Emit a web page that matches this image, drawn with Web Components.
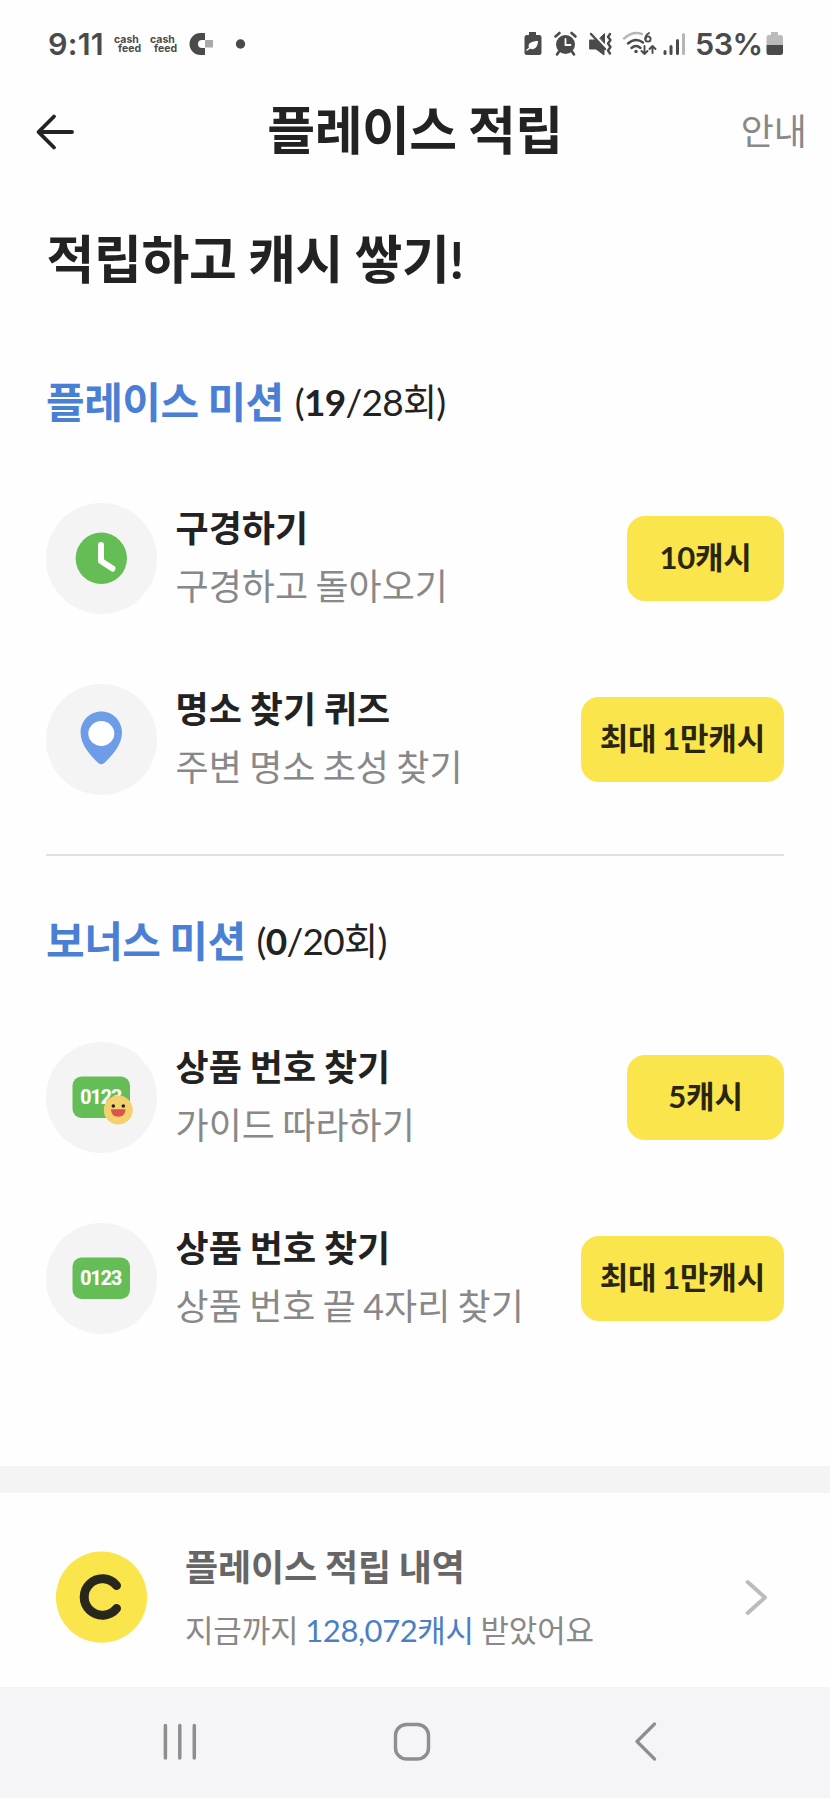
<!DOCTYPE html>
<html lang="ko">
<head>
<meta charset="utf-8">
<meta name="viewport" content="width=device-width, initial-scale=1">
<title>플레이스 적립</title>
<style>
     body {
          margin: 0;
          background: #fefefe;
          color: #222;
          font-family: Lato, "Noto Sans CJK KR", sans-serif;
          word-spacing: -0.8px;
     }
     main {
          padding: 0 46px;
          height: 1284px;
          box-sizing: border-box;
     }
     h1 {
          margin: 0;
          padding: 37px 0 0 0.5px;
          font-size: 52px;
          line-height: 80px;
          letter-spacing: -0.3px;
          word-spacing: -1px;
     }
     hr {
          margin: 24px 0 0;
          border: 0;
          height: 2px;
          background: #e0e0e0;
     }
</style>
</head>
<body>
<status-bar></status-bar>
<app-header>플레이스 적립<span slot="action">안내</span></app-header>
<main>
     <h1>적립하고 캐시 쌓기!</h1>
     <mission-section style="margin-top: 73px" name="플레이스 미션" done="19" total="28">
          <mission-item icon="clock" reward="10캐시">구경하기<span slot="sub">구경하고 돌아오기</span></mission-item>
          <mission-item icon="pin" reward="최대 1만캐시">명소 찾기 퀴즈<span slot="sub">주변 명소 초성 찾기</span></mission-item>
     </mission-section>
     <hr>
     <mission-section style="margin-top: 55px" name="보너스 미션" done="0" total="20">
          <mission-item icon="guide" reward="5캐시">상품 번호 찾기<span slot="sub">가이드 따라하기</span></mission-item>
          <mission-item icon="number" reward="최대 1만캐시">상품 번호 찾기<span slot="sub">상품 번호 끝 4자리 찾기</span></mission-item>
     </mission-section>
</main>
<history-link amount="128,072캐시">플레이스 적립 내역</history-link>
<nav-bar></nav-bar>

<script>
"use strict";

function render(element, html){
     const template = document.createElement('template');
     template.innerHTML = html;
     element.attachShadow({ mode: 'open' });
     element.shadowRoot.appendChild( template.content.cloneNode(true) );
}

class StatusBar extends HTMLElement {
     constructor(){
          super();
          render(this, `
               <style>
                    :host {
                         display: flex;
                         align-items: center;
                         height: 78px;
                         padding: 10px 46px 0 48px;
                         box-sizing: border-box;
                         color: #4a4a4a;
                         font-family: Inter, sans-serif;
                         font-weight: 600;
                    }
                    .time { font-size: 30.500px; width: 66px; letter-spacing: 0.2px; margin-top: -1px; }
                    .cash {
                         width: 36px;
                         font-size: 10.500px;
                         line-height: 9px;
                         font-weight: 700;
                    }
                    .cash span { display: block; padding-left: 4px; }
                    .icons { display: flex; align-items: center; margin-left: auto; }
                    .percent { font-size: 30.500px; width: 71px; margin: -1px 0 0 9px; letter-spacing: -0.5px; }
                    svg { display: block; flex: none; }
               </style>
               <div class="time">9:11</div>
               <div class="cash">cash<span>feed</span></div>
               <div class="cash">cash<span>feed</span></div>
               <svg width="60" height="26" viewBox="0 0 60 26">
                    <path d="M19 2v7h-3a4 4 0 0 0 0 8h3v7h-4.500a11 11 0 0 1 0-22z" fill="#4a4a4a"/>
                    <rect x="19" y="9" width="8" height="7.500" fill="#aaa"/>
                    <circle cx="54.500" cy="13" r="4.700" fill="#4a4a4a"/>
               </svg>
               <div class="icons">
                    <svg width="162" height="26" viewBox="0 0 162 26" fill="none" stroke="#4a4a4a" stroke-width="2.400" stroke-linecap="round">
                         <path d="M5 1h7v3h3q2.500 0 2.500 2.500v15q0 2.500-2.500 2.500H3q-2.500 0-2.500-2.500v-15Q.5 4 3 4h2z" fill="#4a4a4a" stroke="none"/>
                         <path d="M5 17c-2-5 3-7 9-7 0 7-5 10-9 7z" fill="#fff" stroke="none"/>
                         <path d="M3 19l7-5" stroke="#fff" stroke-width="1.500"/>
                         <circle cx="41.500" cy="13.500" r="9.500" fill="#4a4a4a" stroke="none"/>
                         <path d="M31.500 5.500l4-3.500M51.500 5.500l-4-3.500M35 20.500l-2 3M48 20.500l2 3" stroke-width="2.600"/>
                         <path d="M41.500 8v6h5" stroke="#fff" stroke-width="1.800"/>
                         <path d="M66 9h5l4 4 5 5v6l-8-6h-6zM76 7l4.500-4.500V12z" fill="#4a4a4a" stroke="#4a4a4a" stroke-width="1" stroke-linejoin="round"/>
                         <path d="M67 3l14 15"/>
                         <path d="M86 3l-2 3 2.500 3-2.500 3.500 2.500 3.500-2.500 3.500 2 3" stroke-linejoin="round"/>
                         <path d="M100 7.500q9-8 18-4.500" stroke="#b5b5b5"/>
                         <path d="M104 12.500q7.500-6.500 15-1M107.500 17q4.500-4 9 0"/>
                         <circle cx="112" cy="20.500" r="1.700" fill="#4a4a4a" stroke="none"/>
                         <path d="M125 2c-3 2-4 4.500-3.500 6.500" stroke-width="1.900"/>
                         <circle cx="124" cy="8" r="2.600" stroke-width="1.900"/>
                         <path d="M120.500 15v8m-3-3l3 3 3-3M128.500 22v-7m-3 3l3-3 3 3" stroke-width="1.900" stroke-linejoin="round"/>
                         <path d="M141 20.500v2M147 15.500v7M153.500 9.500v13" stroke-width="3"/>
                         <path d="M159.500 3.500v19" stroke="#b5b5b5" stroke-width="3"/>
                    </svg>
                    <div class="percent">53%</div>
                    <svg width="18" height="26" viewBox="0 0 18 26">
                         <path d="M5 1h7v3h3q2 0 2 2.500V14H.5V6.500Q.5 4 3 4h2z" fill="#bbb"/>
                         <path d="M.5 14H17v7.500q0 2.500-2.500 2.500H3q-2.500 0-2.500-2.500z" fill="#4a4a4a"/>
                    </svg>
               </div>
          `);
     }
}

class AppHeader extends HTMLElement {
     constructor(){
          super();
          render(this, `
               <style>
                    :host {
                         display: grid;
                         grid-template-columns: 1fr auto 1fr;
                         align-items: center;
                         height: 104px;
                         padding: 0 23px 0 35px;
                    }
                    .title {
                         transform: translateX(-6px);
                         font-size: 52px;
                         font-weight: 700;
                         line-height: 80px;
                         letter-spacing: -0.5px;
                    }
                    .action { text-align: right; padding-top: 2px; font-size: 36px; color: #888; line-height: 50px; }
                    svg { display: block; margin-top: 4px; }
               </style>
               <svg width="42" height="38" viewBox="0 0 42 38" fill="none" stroke="#222" stroke-width="3.800" stroke-linecap="round" stroke-linejoin="round">
                    <path d="M37 19H4M19 3.500L3.500 19 19 34.500"/>
               </svg>
               <div class="title"><slot></slot></div>
               <div class="action"><slot name="action"></slot></div>
          `);
     }
}

class MissionSection extends HTMLElement {
     constructor(){
          super();
          render(this, `
               <style>
                    :host { display: block; }
                    .head {
                         display: flex;
                         gap: 11px;
                         margin-bottom: 36px;
                         font-size: 37px;
                         line-height: 60px;
                         height: 60px;
                    }
                    .name { font-size: 42px; font-weight: 700; color: #4a80d4; letter-spacing: -0.5px; }
                    .count { letter-spacing: -0.7px; }
               </style>
               <div class="head">
                    <span class="name">${this.getAttribute('name')}</span>
                    <span class="count">(<b>${this.getAttribute('done')}</b>/${this.getAttribute('total')}회)</span>
               </div>
               <slot></slot>
          `);
     }
}

const icons = {
     clock: `
          <circle cx="55.300" cy="55.300" r="25.700" fill="#65bd55"/>
          <path d="M55 42v16l11.500 7.500" fill="none" stroke="#fff" stroke-width="6" stroke-linecap="round" stroke-linejoin="round"/>`,
     pin: `
          <path d="M55.300 27.500c-11.500 0-20.700 9.200-20.700 21 0 12.500 10.500 24 18 30.700q2.700 2.300 5.400 0c7.500-6.700 18-18.200 18-30.700 0-11.800-9.200-21-20.700-21z" fill="#6c9de6"/>
          <ellipse cx="55.300" cy="49.500" rx="13" ry="12.400" fill="#fff"/>`,
     number: `
          <rect x="26.500" y="34.500" width="57.500" height="41.500" rx="9" fill="#65bd55"/>
          <text x="55.300" y="62" text-anchor="middle" textLength="42" font-family="Roboto" font-weight="700" font-size="19.500" fill="#fff" stroke="#fff" stroke-width="0.200">0123</text>`
};
icons.guide = icons.number + `
     <circle cx="72.300" cy="68" r="14.500" fill="#f5d06f"/>
     <circle cx="67.300" cy="64" r="1.800" fill="#222"/>
     <circle cx="77.300" cy="64" r="1.800" fill="#222"/>
     <path d="M65 67.300h14.500q0 7.400-7.250 7.400T65 67.300z" fill="#d9534f"/>`;

class MissionItem extends HTMLElement {
     constructor(){
          super();
          render(this, `
               <style>
                    :host {
                         display: flex;
                         align-items: center;
                         height: 181px;
                    }
                    .icon {
                         flex: none;
                         width: 110.600px;
                         height: 110.600px;
                         border-radius: 50%;
                         background: #f4f4f4;
                    }
                    .text {
                         flex: 1;
                         margin: -3px 0 0 19px;
                         font-size: 36px;
                         line-height: 58px;
                         white-space: nowrap;
                    }
                    .title { font-weight: 700; }
                    .sub { color: #888; word-spacing: -1.900px; }
               </style>
               <svg class="icon" viewBox="0 0 110.600 110.600">${icons[this.getAttribute('icon')]}</svg>
               <div class="text">
                    <div class="title"><slot></slot></div>
                    <div class="sub"><slot name="sub"></slot></div>
               </div>
               <cash-button>${this.getAttribute('reward')}</cash-button>
          `);
     }
}

class CashButton extends HTMLElement {
     constructor(){
          super();
          render(this, `
               <style>
                    :host { display: block; }
                    button {
                         display: block;
                         min-width: 157px;
                         height: 85px;
                         padding: 0 19px 6px;
                         border: 0;
                         border-radius: 18px;
                         background: #fbe54d;
                         color: #2a260c;
                         font: inherit;
                         font-size: 31px;
                         font-weight: 700;
                         letter-spacing: -0.2px;
                         word-spacing: -1.5px;
                         white-space: nowrap;
                    }
               </style>
               <button type="button"><slot></slot></button>
          `);
     }
}

class HistoryLink extends HTMLElement {
     constructor(){
          super();
          render(this, `
               <style>
                    :host {
                         display: flex;
                         align-items: center;
                         height: 221px;
                         box-sizing: border-box;
                         border-top: 27.500px solid #f4f4f4;
                         padding: 13px 61px 0 56px;
                    }
                    .text { flex: 1; margin: 4px 0 0 37px; white-space: nowrap; }
                    .title { font-size: 36px; line-height: 62px; font-weight: 700; color: #666; letter-spacing: -0.1px; }
                    .sub { font-size: 31px; line-height: 64px; color: #888; letter-spacing: -0.2px; }
                    .amount { color: #4a7fc4; letter-spacing: -0.4px; }
                    svg { display: block; flex: none; }
               </style>
               <svg width="92" height="92" viewBox="0 0 92 92">
                    <circle cx="45.500" cy="46.200" r="45.600" fill="#fbe54d"/>
                    <path d="M60.500 34.500A18.200 18.200 0 1 0 60.500 57.500" fill="none" stroke="#28271c" stroke-width="9" stroke-linecap="round"/>
               </svg>
               <div class="text">
                    <div class="title"><slot></slot></div>
                    <div class="sub">지금까지 <span class="amount">${this.getAttribute('amount')}</span> 받았어요</div>
               </div>
               <svg width="24" height="40" viewBox="0 0 24 40" fill="none" stroke="#bcbcbc" stroke-width="4" stroke-linecap="round" stroke-linejoin="round">
                    <path d="M2.700 5L20 20.500 2.700 36"/>
               </svg>
          `);
     }
}

class NavBar extends HTMLElement {
     constructor(){
          super();
          render(this, `
               <style>
                    :host {
                         display: grid;
                         grid-template-columns: 232px 1fr 24px;
                         height: 111px;
                         padding: 0 171px 2px 160px;
                         align-items: center;
                         box-sizing: border-box;
                         background: #f5f5f8;
                    }
                    svg { display: block; }
               </style>
               <svg width="40" height="40" viewBox="0 0 40 40" stroke="#8e8e8e" stroke-width="3.500" stroke-linecap="round">
                    <path d="M5.400 3.500v32.500M19.800 3.500v32.500M34.300 3.500v32.500"/>
               </svg>
               <svg width="40" height="40" viewBox="0 0 40 40" fill="none" stroke="#8e8e8e" stroke-width="3.400">
                    <rect x="3.500" y="2.500" width="33" height="34.500" rx="11"/>
               </svg>
               <svg width="24" height="40" viewBox="0 0 24 40" fill="none" stroke="#8e8e8e" stroke-width="3.200" stroke-linecap="round" stroke-linejoin="round">
                    <path d="M19.500 2L2 19.500 19.500 37"/>
               </svg>
          `);
     }
}

window.customElements.define('status-bar', StatusBar);
window.customElements.define('app-header', AppHeader);
window.customElements.define('cash-button', CashButton);
window.customElements.define('mission-item', MissionItem);
window.customElements.define('mission-section', MissionSection);
window.customElements.define('history-link', HistoryLink);
window.customElements.define('nav-bar', NavBar);
</script>
</body>
</html>
